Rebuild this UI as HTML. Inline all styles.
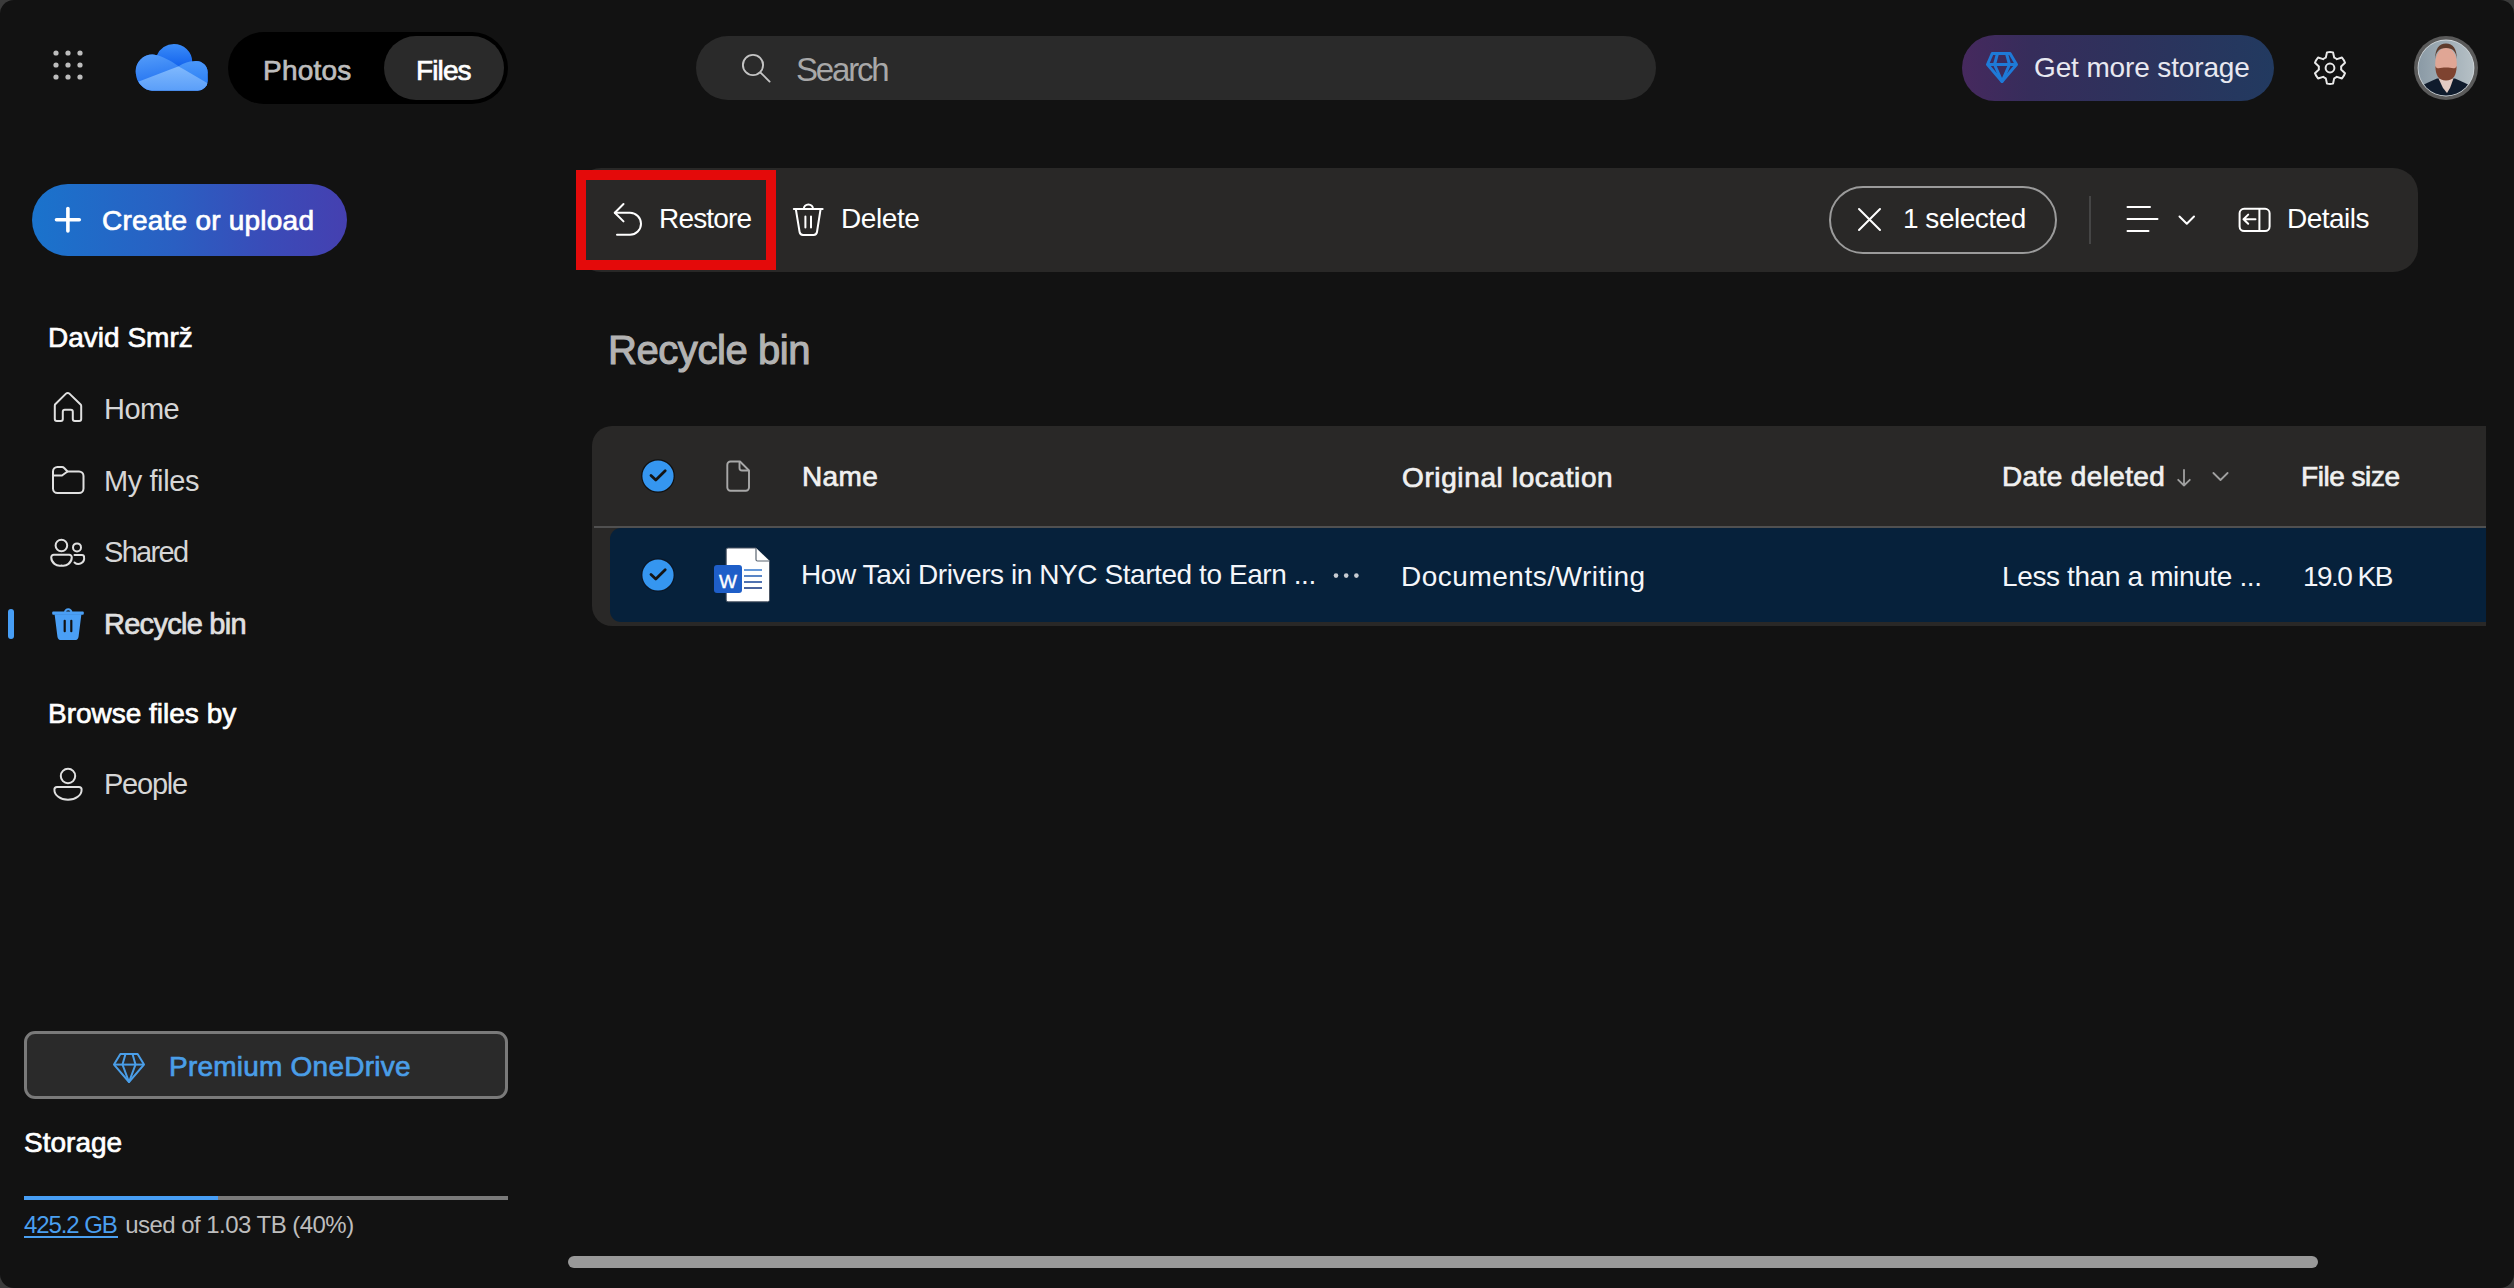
<!DOCTYPE html>
<html><head><meta charset="utf-8">
<style>
html,body{margin:0;padding:0;width:2514px;height:1288px;overflow:hidden;background:#3b3b3b;}
body{font-family:"Liberation Sans",sans-serif;}
#app{position:absolute;left:0;top:0;width:2514px;height:1288px;background:#121212;border-radius:14px;overflow:hidden;}
.a{position:absolute;box-sizing:border-box;}
.t{position:absolute;line-height:1;white-space:nowrap;}
.b{font-weight:normal;-webkit-text-stroke:0.7px currentColor;}
#t-title{-webkit-text-stroke:1.1px currentColor;}
svg{position:absolute;overflow:visible;}
</style></head>
<body><div id="app">
<!-- app launcher dots -->
<svg style="left:0;top:0" width="100" height="100">
  <g fill="#bdbdbd">
    <circle cx="56" cy="53" r="2.6"/><circle cx="68" cy="53" r="2.6"/><circle cx="80" cy="53" r="2.6"/>
    <circle cx="56" cy="65" r="2.6"/><circle cx="68" cy="65" r="2.6"/><circle cx="80" cy="65" r="2.6"/>
    <circle cx="56" cy="77" r="2.6"/><circle cx="68" cy="77" r="2.6"/><circle cx="80" cy="77" r="2.6"/>
  </g>
</svg>

<!-- OneDrive logo -->
<svg style="left:0;top:0" width="240" height="110">
  <defs>
    <linearGradient id="cgL" gradientUnits="userSpaceOnUse" x1="150" y1="55" x2="155" y2="88"><stop offset="0" stop-color="#519af9"/><stop offset="1" stop-color="#1f6ff0"/></linearGradient>
    <linearGradient id="cgT" gradientUnits="userSpaceOnUse" x1="0" y1="44" x2="0" y2="67"><stop offset="0" stop-color="#3b8cf8"/><stop offset="1" stop-color="#1363ed"/></linearGradient>
    <linearGradient id="cgR" gradientUnits="userSpaceOnUse" x1="0" y1="60" x2="0" y2="86"><stop offset="0" stop-color="#4d99f9"/><stop offset="1" stop-color="#2a7ef5"/></linearGradient>
    <linearGradient id="cgB" gradientUnits="userSpaceOnUse" x1="0" y1="66" x2="0" y2="91"><stop offset="0" stop-color="#80b9fd"/><stop offset="1" stop-color="#5a9ef9"/></linearGradient>
    <clipPath id="cloud">
      <circle cx="152.3" cy="71.2" r="16.6"/>
      <circle cx="173.9" cy="62.3" r="18.4"/>
      <circle cx="196" cy="72.6" r="11.7"/>
      <path d="M136.4 76 C137 83 145 90.7 152 90.7 L197.7 90.7 A10 10 0 0 0 207.7 80.7 L207.6 74 L190 64 L150 66 Z"/>
    </clipPath>
  </defs>
  <g clip-path="url(#cloud)">
    <rect x="130" y="40" width="90" height="60" fill="url(#cgT)"/>
    <path d="M130 40 L156 40 L154.8 54.4 C162 56 171 60.5 178.6 66.3 L130 90 Z" fill="url(#cgL)"/>
    <path d="M178.6 66.3 C184 62.5 189 61.2 193.6 60.9 L215 55 L215 92 Z" fill="url(#cgR)"/>
    <path d="M130 85 L178.6 66.3 L214 87 L214 100 L130 100 Z" fill="url(#cgB)"/>
  </g>
</svg>

<!-- toggle Photos/Files -->
<div class="a" style="left:228px;top:32px;width:280px;height:72px;border-radius:36px;background:#000"></div>
<div class="a" style="left:384px;top:36px;width:120px;height:64px;border-radius:32px;background:#2a2a2a"></div>

<!-- search -->
<div class="a" style="left:696px;top:36px;width:960px;height:64px;border-radius:32px;background:#2a2a2a"></div>
<svg style="left:0;top:0" width="800" height="100">
  <circle cx="753" cy="65" r="10.1" fill="none" stroke="#c4c4c4" stroke-width="1.9"/>
  <line x1="760.6" y1="72.6" x2="769.6" y2="81.6" stroke="#c4c4c4" stroke-width="1.9" stroke-linecap="round"/>
</svg>

<!-- get more storage -->
<div class="a" style="left:1962px;top:35px;width:312px;height:66px;border-radius:33px;background:linear-gradient(90deg,#46295e 0%,#362d5b 22%,#2d325c 55%,#223a60 100%)"></div>
<svg style="left:0;top:0" width="2100" height="100">
  <g fill="none" stroke="#1e7ad8" stroke-width="3" stroke-linejoin="round">
    <path d="M1992.2 53.5 L2010 53.5 L2016.5 64.5 L2002 81.5 L1987.5 64.5 Z"/>
    <path d="M1987.5 64.5 L2016.5 64.5"/>
    <path d="M1997.5 53.5 L1994.5 64.5 L2002 81.5 L2009.5 64.5 L2006.5 53.5"/>
  </g>
</svg>

<!-- gear -->
<svg style="left:2310px;top:47.8px" width="40" height="40" viewBox="0 0 40 40">
  <path fill="none" stroke="#e8e8e8" stroke-width="2" stroke-linejoin="round" d="M16.97 4.39 A15.9 15.9 0 0 1 23.03 4.39 L24.20 9.62 A11.2 11.2 0 0 1 26.90 11.17 L32.00 9.57 A15.9 15.9 0 0 1 35.03 14.82 L31.09 18.44 A11.2 11.2 0 0 1 31.09 21.56 L35.03 25.18 A15.9 15.9 0 0 1 32.00 30.43 L26.90 28.83 A11.2 11.2 0 0 1 24.20 30.38 L23.03 35.61 A15.9 15.9 0 0 1 16.97 35.61 L15.80 30.38 A11.2 11.2 0 0 1 13.10 28.83 L8.00 30.43 A15.9 15.9 0 0 1 4.97 25.18 L8.91 21.56 A11.2 11.2 0 0 1 8.91 18.44 L4.97 14.82 A15.9 15.9 0 0 1 8.00 9.57 L13.10 11.17 A11.2 11.2 0 0 1 15.80 9.62 Z"/>
  <circle cx="20" cy="20" r="4.4" fill="none" stroke="#e8e8e8" stroke-width="2"/>
</svg>

<!-- avatar -->
<svg style="left:2414px;top:36px" width="64" height="64" viewBox="0 0 64 64">
  <defs><clipPath id="av"><circle cx="32" cy="32" r="27.6"/></clipPath>
  <linearGradient id="avbg" x1="0" y1="0" x2="1" y2="0"><stop offset="0" stop-color="#8797a3"/><stop offset="1" stop-color="#b9c3c8"/></linearGradient></defs>
  <circle cx="32" cy="32" r="32" fill="#5a5a5a"/>
  <circle cx="32" cy="32" r="28.4" fill="#d0d6da"/>
  <g clip-path="url(#av)">
    <rect x="0" y="0" width="64" height="64" fill="url(#avbg)"/>
    <path d="M6 64 L6 51 C11 47.5 17 45 23 42.5 L41 42.5 C47 45 53 47.5 58 51 L58 64 Z" fill="#0f1b2c"/>
    <path d="M24.5 42.5 L39.5 42.5 L36 52 L33 57 L29 52 Z" fill="#e2cbc3"/>
    <ellipse cx="32" cy="27.5" rx="10.8" ry="16" fill="#e0a695"/>
    <path d="M21.2 23 C21 13 25 7.4 32 7.4 C39 7.4 43 13 42.8 23 C42 15.5 39 12 32 12 C25 12 22 15.5 21.2 23 Z" fill="#5e3b2c"/>
    <path d="M21.4 30 C21.4 39 24.5 44.5 32 44.5 C39.5 44.5 42.6 39 42.6 30 C41 33.5 38.5 32.2 36 31.8 C34 31.5 30 31.5 28 31.8 C25.5 32.2 23 33.5 21.4 30 Z" fill="#7e4330"/>
  </g>
</svg>

<!-- create or upload -->
<div class="a" style="left:32px;top:184px;width:315px;height:72px;border-radius:36px;background:linear-gradient(90deg,#1a73cc 0%,#2a5fc2 45%,#3a4bb8 75%,#4540b0 100%)"></div>
<svg style="left:0;top:0" width="100" height="260">
  <g stroke="#fff" stroke-width="3.6" stroke-linecap="round">
    <line x1="67.9" y1="208.5" x2="67.9" y2="231"/>
    <line x1="56.5" y1="219.8" x2="79.3" y2="219.8"/>
  </g>
</svg>

<!-- command bar -->
<div class="a" style="left:576px;top:168px;width:1842px;height:104px;border-radius:25px;background:#292827"></div>
<div class="a" style="left:576px;top:170px;width:200px;height:100px;border:10px solid #e40a0a"></div>
<svg style="left:0;top:0" width="2400" height="280">
  <g fill="none" stroke="#ffffff" stroke-width="2" stroke-linecap="round" stroke-linejoin="round">
    <!-- restore -->
    <path d="M623.5 204 L614.8 212.7 L623.5 221.4"/>
    <path d="M614.8 212.7 L630 212.7 A11 11 0 0 1 630 234.7 L617 234.7"/>
    <!-- trash -->
    <path d="M793.8 209 L822.6 209"/>
    <path d="M803.8 209 A4.6 4.6 0 0 1 813 209"/>
    <path d="M795.8 209 L799.6 232 A3.6 3.6 0 0 0 803 235 L813.6 235 A3.6 3.6 0 0 0 817 232 L820.6 209"/>
    <path d="M805.4 216.5 L805.4 227.5 M811 216.5 L811 227.5"/>
    <!-- X -->
    <path d="M1859 209 L1880 230 M1880 209 L1859 230"/>
    <!-- lines -->
    <path d="M2127.5 207 L2150 207 M2127.5 219 L2157.5 219 M2127.5 231 L2148.5 231"/>
    <!-- chevron -->
    <path d="M2179.5 216.5 L2186.8 223.8 L2194 216.5"/>
    <!-- details -->
    <rect x="2239.6" y="208.8" width="30" height="22.2" rx="4.5"/>
    <path d="M2259.4 209 L2259.4 231"/>
    <path d="M2243.5 219.2 L2255.5 219.2 M2248.2 214.6 L2243.5 219.2 L2248.2 223.8"/>
  </g>
</svg>
<div class="a" style="left:1829px;top:186px;width:228px;height:68px;border-radius:34px;border:2px solid #9b9b9b"></div>
<div class="a" style="left:2089px;top:196px;width:2px;height:48px;background:#454545"></div>

<!-- sidebar icons -->
<svg style="left:0;top:0" width="100" height="820">
  <g fill="none" stroke="#e0e0e0" stroke-width="2" stroke-linecap="round" stroke-linejoin="round">
    <!-- home -->
    <path d="M55 404.5 L66 393.6 A2.4 2.4 0 0 1 69.4 393.6 L80.6 404.5 A2 2 0 0 1 81.2 406 L81.2 419 A2 2 0 0 1 79.2 421 L74.8 421 A2 2 0 0 1 72.8 419 L72.8 411.8 A2 2 0 0 0 70.8 409.8 L64.8 409.8 A2 2 0 0 0 62.8 411.8 L62.8 419 A2 2 0 0 1 60.8 421 L56.8 421 A2 2 0 0 1 54.8 419 L54.8 406 Z"/>
    <!-- folder -->
    <path d="M53 471.5 A4.5 4.5 0 0 1 57.5 467 L62 467 A3 3 0 0 1 64.2 468 L67.5 471.5 L79 471.5 A4.5 4.5 0 0 1 83.5 476 L83.5 488.5 A4.5 4.5 0 0 1 79 493 L57.5 493 A4.5 4.5 0 0 1 53 488.5 Z"/>
    <path d="M53 475.5 L62 475.5 L67.5 471.5"/>
    <!-- shared -->
    <circle cx="61.4" cy="545.5" r="5.8"/>
    <circle cx="77" cy="547.4" r="4"/>
    <path d="M53.8 554.8 L69.2 554.8 A2.6 2.6 0 0 1 71.8 557.4 A8.6 8.6 0 0 1 61.5 565.6 A8.6 8.6 0 0 1 51.2 557.4 A2.6 2.6 0 0 1 53.8 554.8 Z"/>
    <path d="M74.5 554.9 L82 554.9 A2 2 0 0 1 84 556.9 A5.8 5.8 0 0 1 74.5 562.5"/>
    <!-- people -->
    <circle cx="68" cy="776" r="7.2"/>
    <path d="M57 787 L79 787 A2.6 2.6 0 0 1 81.6 789.6 A13.6 10 0 0 1 68 799.8 A13.6 10 0 0 1 54.4 789.6 A2.6 2.6 0 0 1 57 787 Z"/>
  </g>
  <!-- recycle bin filled -->
  <g fill="#4a9ff5">
    <path d="M64 612.5 A4.2 4.2 0 0 1 72.4 612.5 L70.4 612.5 A2.2 2.2 0 0 0 66 612.5 Z"/>
    <rect x="52.2" y="611.6" width="31.6" height="3.2" rx="1"/>
    <path d="M54.6 614.2 L81.4 614.2 L78.6 636.4 A4 4 0 0 1 74.6 640 L61.4 640 A4 4 0 0 1 57.4 636.4 Z"/>
  </g>
  <g fill="#121212"><rect x="63.6" y="619.8" width="2.2" height="12.4" rx="1"/><rect x="70.2" y="619.8" width="2.2" height="12.4" rx="1"/></g>
</svg>
<div class="a" style="left:8px;top:609px;width:6px;height:30px;border-radius:3px;background:#479ef5"></div>

<!-- premium -->
<div class="a" style="left:24px;top:1031px;width:484px;height:68px;border-radius:11px;border:3px solid #7a7a7a;background:#2a2a2a"></div>
<svg style="left:0;top:0" width="200" height="1100">
  <g fill="none" stroke="#4a9ee8" stroke-width="2" stroke-linejoin="round">
    <path d="M120.4 1054 L137.6 1054 L144 1064.6 L129 1082 L114 1064.6 Z"/>
    <path d="M114 1064.6 L144 1064.6"/>
    <path d="M125.5 1054 L122.5 1064.6 L129 1082 L135.5 1064.6 L132.5 1054"/>
  </g>
</svg>
<div class="a" style="left:24px;top:1196px;width:484px;height:4px;background:#7a7a7a"></div>
<div class="a" style="left:24px;top:1196px;width:194px;height:4px;background:#479ef5"></div>
<div class="a" style="left:24px;top:1236px;width:94px;height:2px;background:#4a9ff0"></div>

<!-- table -->
<div class="a" style="left:592px;top:426px;width:1894px;height:200px;border-radius:20px 0 0 20px;background:#292827"></div>
<div class="a" style="left:594px;top:526px;width:1892px;height:2px;background:#505050"></div>
<div class="a" style="left:610px;top:528px;width:1876px;height:94px;border-radius:11px 0 0 11px;background:#06213b"></div>
<svg style="left:0;top:0" width="2500" height="630">
  <!-- check circles -->
  <circle cx="658" cy="476" r="16.8" fill="#101010"/>
  <circle cx="658" cy="476" r="15.6" fill="#3596f0"/>
  <path d="M651 475.5 L655.8 480 L665.2 470.8" fill="none" stroke="#141414" stroke-width="2.8" stroke-linecap="round" stroke-linejoin="round"/>
  <circle cx="658" cy="575" r="16.8" fill="#0a1626"/>
  <circle cx="658" cy="575" r="15.6" fill="#3596f0"/>
  <path d="M651 574.5 L655.8 579 L665.2 569.8" fill="none" stroke="#141414" stroke-width="2.8" stroke-linecap="round" stroke-linejoin="round"/>
  <!-- header file icon -->
  <path d="M730.5 461.5 L740 461.5 L749 470.5 L749 487.5 A3.2 3.2 0 0 1 745.8 490.7 L730.5 490.7 A3.2 3.2 0 0 1 727.3 487.5 L727.3 464.7 A3.2 3.2 0 0 1 730.5 461.5 Z" fill="none" stroke="#a8a8a8" stroke-width="1.9" stroke-linejoin="round"/>
  <path d="M739.5 461.8 L739.5 468 A2.5 2.5 0 0 0 742 470.5 L748.7 470.5" fill="none" stroke="#a8a8a8" stroke-width="1.9" stroke-linejoin="round"/>
  <!-- word icon -->
  <path d="M728 548 L756 548 L769.5 561 L769.5 600 A1.8 1.8 0 0 1 767.7 601.8 L728 601.8 A1.8 1.8 0 0 1 726.2 600 L726.2 549.8 A1.8 1.8 0 0 1 728 548 Z" fill="#ffffff" stroke="#4a5564" stroke-width="1"/>
  <path d="M756 548 L756 559.5 A1.5 1.5 0 0 0 757.5 561 L769.5 561" fill="#ffffff" stroke="#5a6470" stroke-width="1.2"/>
  <g stroke-width="1.6">
    <line x1="744" y1="570" x2="762" y2="570" stroke="#3f7fd0"/>
    <line x1="744" y1="576" x2="762" y2="576" stroke="#2f66b8"/>
    <line x1="744" y1="582" x2="762" y2="582" stroke="#244f9e"/>
    <line x1="744" y1="588" x2="762" y2="588" stroke="#1c3d86"/>
  </g>
  <rect x="714" y="565" width="28" height="28" rx="3" fill="#1e5ec8"/>
  <text x="728" y="587.5" font-family="Liberation Sans" font-size="19" fill="#fff" stroke="#fff" stroke-width="0.4" text-anchor="middle">W</text>
  <!-- more dots -->
  <g fill="#c8ccd2"><circle cx="1336" cy="575.6" r="2.3"/><circle cx="1346.2" cy="575.6" r="2.3"/><circle cx="1356.4" cy="575.6" r="2.3"/></g>
  <!-- sort arrow + chevron -->
  <g fill="none" stroke="#a0a0a0" stroke-width="1.8" stroke-linecap="round" stroke-linejoin="round">
    <path d="M2184 470 L2184 485.5 M2178.2 479.8 L2184 485.5 L2189.8 479.8"/>
    <path d="M2213.4 473 L2220.5 480 L2227.6 473"/>
  </g>
</svg>

<!-- scrollbar -->
<div class="a" style="left:568px;top:1256px;width:1750px;height:12px;border-radius:6px;background:#999999"></div>

<div id="t-photos" class="t b" style="left:263.00px;top:56.50px;font-size:28px;color:#bdbdbd;letter-spacing:0.200px">Photos</div>
<div id="t-files" class="t b" style="left:416.00px;top:56.50px;font-size:28px;color:#ffffff;letter-spacing:-0.875px">Files</div>
<div id="t-search" class="t" style="left:796.00px;top:53.05px;font-size:33px;color:#a8a8a8;letter-spacing:-2.180px">Search</div>
<div id="t-gms" class="t" style="left:2034.00px;top:54.10px;font-size:28px;color:#e8e8f0;letter-spacing:-0.133px">Get more storage</div>
<div id="t-create" class="t b" style="left:102.00px;top:207.10px;font-size:28px;color:#ffffff;letter-spacing:0.227px">Create or upload</div>
<div id="t-restore" class="t" style="left:659.00px;top:205.20px;font-size:28px;color:#ffffff;letter-spacing:-0.817px">Restore</div>
<div id="t-delete" class="t" style="left:841.00px;top:205.20px;font-size:28px;color:#ffffff;letter-spacing:-0.420px">Delete</div>
<div id="t-sel" class="t" style="left:1903.00px;top:205.40px;font-size:28px;color:#ffffff;letter-spacing:-0.489px">1 selected</div>
<div id="t-details" class="t" style="left:2287.00px;top:205.20px;font-size:28px;color:#ffffff;letter-spacing:-0.533px">Details</div>
<div id="t-david" class="t b" style="left:48.00px;top:324.20px;font-size:28px;color:#ffffff;letter-spacing:0.011px">David Smrž</div>
<div id="t-home" class="t" style="left:104.00px;top:394.85px;font-size:29px;color:#d6d6d6;letter-spacing:-0.567px">Home</div>
<div id="t-myfiles" class="t" style="left:104.00px;top:466.55px;font-size:29px;color:#d6d6d6;letter-spacing:-0.414px">My files</div>
<div id="t-shared" class="t" style="left:104.00px;top:538.35px;font-size:29px;color:#d6d6d6;letter-spacing:-1.700px">Shared</div>
<div id="t-recycle" class="t b" style="left:104.00px;top:610.15px;font-size:29px;color:#e0e0e0;letter-spacing:-0.730px">Recycle bin</div>
<div id="t-browse" class="t b" style="left:48.00px;top:700.30px;font-size:28px;color:#ffffff;letter-spacing:-0.007px">Browse files by</div>
<div id="t-people" class="t" style="left:104.00px;top:770.15px;font-size:29px;color:#d6d6d6;letter-spacing:-1.220px">People</div>
<div id="t-premium" class="t b" style="left:169.00px;top:1053.00px;font-size:28px;color:#4a9ee8;letter-spacing:0.227px">Premium OneDrive</div>
<div id="t-storage" class="t b" style="left:24.00px;top:1128.80px;font-size:28px;color:#ffffff;letter-spacing:0.017px">Storage</div>
<div id="t-gb" class="t" style="left:24.00px;top:1213.20px;font-size:24px;color:#4a9ff0;letter-spacing:-1.100px">425.2 GB</div>
<div id="t-used" class="t" style="left:125.20px;top:1213.20px;font-size:24px;color:#bdbdbd;letter-spacing:-0.536px">used of 1.03 TB (40%)</div>
<div id="t-title" class="t b" style="left:608.00px;top:330.10px;font-size:40px;color:#b3b3b3;letter-spacing:-0.420px">Recycle bin</div>
<div id="t-name" class="t b" style="left:802.00px;top:463.10px;font-size:28px;color:#f0f0f0;letter-spacing:0.367px">Name</div>
<div id="t-origloc" class="t b" style="left:1402.00px;top:463.50px;font-size:28px;color:#f0f0f0;letter-spacing:0.619px">Original location</div>
<div id="t-datedel" class="t b" style="left:2002.00px;top:462.50px;font-size:28px;color:#f0f0f0;letter-spacing:0.373px">Date deleted</div>
<div id="t-filesize" class="t b" style="left:2301.00px;top:463.20px;font-size:28px;color:#f0f0f0;letter-spacing:-0.463px">File size</div>
<div id="t-howtaxi" class="t" style="left:801.00px;top:561.40px;font-size:28px;color:#f4f6fa;letter-spacing:-0.429px">How Taxi Drivers in NYC Started to Earn ...</div>
<div id="t-docs" class="t" style="left:1401.00px;top:563.10px;font-size:28px;color:#f4f6fa;letter-spacing:0.506px">Documents/Writing</div>
<div id="t-less" class="t" style="left:2002.00px;top:563.00px;font-size:28px;color:#f4f6fa;letter-spacing:-0.367px">Less than a minute ...</div>
<div id="t-kb" class="t" style="left:2303.00px;top:563.00px;font-size:28px;color:#f4f6fa;letter-spacing:-1.550px">19.0 KB</div>
</div></body></html>
